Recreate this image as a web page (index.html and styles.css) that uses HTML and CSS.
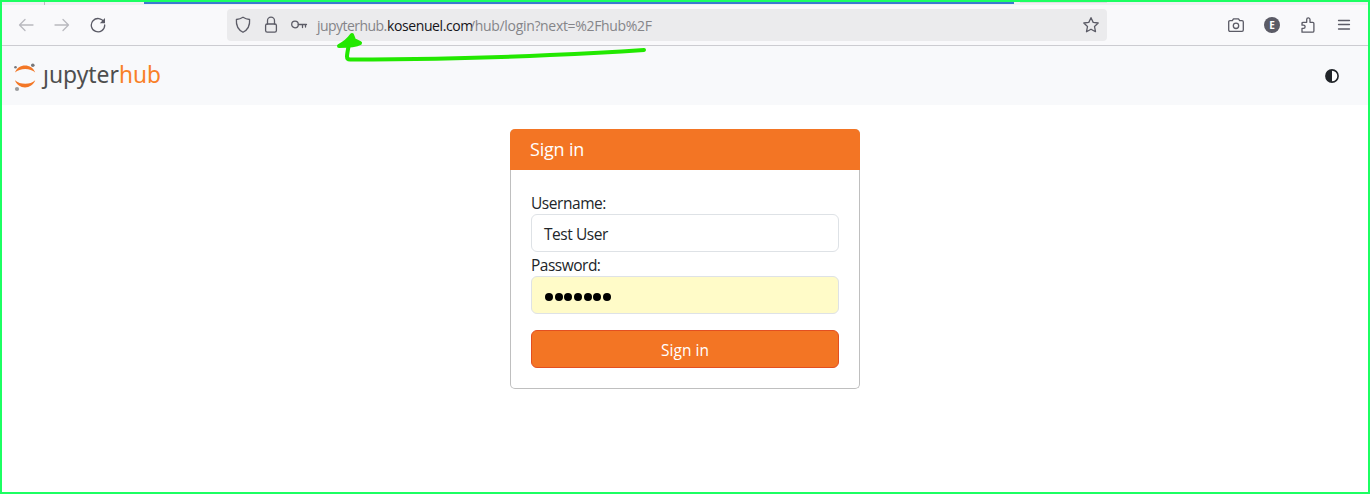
FILE: index.html
```html
<!DOCTYPE html>
<html lang="en">
<head>
<meta charset="utf-8">
<title>JupyterHub</title>
<link rel="stylesheet" href="styles.css">
</head>
<body>
<div class="window">
  <div class="tabstrip"><span class="tab-divider"></span><span class="tab-line"></span><span class="tab-edge"></span></div>
  <header class="toolbar">
    <div class="nav-buttons">
      <svg class="icon faded" viewBox="0 0 16 16"><path d="M15 8H1.500M7 2.500 1.500 8 7 13.500"/></svg>
      <svg class="icon faded" viewBox="0 0 16 16"><path d="M1 8h13.500M9 2.500 14.500 8 9 13.500"/></svg>
      <svg class="icon reload" viewBox="0 0 16 16"><path d="M14 5.200A6.700 6.700 0 1 0 14.700 8"/><path class="solid" d="M15 1v5.200H9.800z"/></svg>
    </div>
    <div class="urlbar">
      <svg class="icon shield" viewBox="0 0 16 18"><path d="M8 1.200c2 1.300 4 2 6.600 2.300.4 5-1.300 10-6.600 12.800C2.700 13.500 1 8.500 1.400 3.500 4 3.200 6 2.500 8 1.200z"/></svg>
      <svg class="icon lock" viewBox="0 0 16 18"><rect x="2.600" y="8" width="10.800" height="8.200" rx="1.600"/><path d="M4.500 8V4.700a3.500 3.500 0 0 1 7 0V8"/></svg>
      <svg class="icon key" viewBox="0 0 18 16"><circle cx="5" cy="7.500" r="3.300"/><path d="M8.300 7.500h8.200M12.500 7.500v3M15.500 7.500v2.500"/></svg>
      <div class="url"><span class="url-sub">jupyterhub.</span><span class="url-host">kosenuel.com</span><span class="url-path">/hub/login?next=%2Fhub%2F</span></div>
      <svg class="icon star" viewBox="0 0 18 18"><path d="M9 1.700 11.200 6.400l5 .6-3.700 3.500 1 5.200L9 13.200l-4.500 2.500 1-5.200L1.800 7l5-.6z"/></svg>
    </div>
    <div class="actions">
      <svg class="icon" viewBox="0 0 16 16"><path d="M2 3.600h2.300L5.500 1.800h5l1.200 1.800H14c.8 0 1.300.5 1.300 1.300V13c0 .8-.5 1.300-1.300 1.300H2c-.8 0-1.300-.5-1.300-1.300V4.900c0-.8.500-1.300 1.300-1.300z"/><circle cx="8" cy="8.800" r="2.700"/></svg>
      <span class="account">E</span>
      <svg class="icon" viewBox="0 0 16 16"><path d="M2 15.200h10.500c.9 0 1.400-.5 1.400-1.300V6.400c0-.7-.4-1.100-1.100-1.100H10V2.600c0-2.200-3.300-2.200-3.300 0v2.700H3.200c-.8 0-1.200.4-1.200 1.100v1.800h1.400c2.300 0 2.300 3.200 0 3.200H2z"/></svg>
      <svg class="icon" viewBox="0 0 16 16"><path d="M2.500 3.500h11M2.500 7.500h11M2.500 12h11"/></svg>
    </div>
  </header>
  <nav class="navbar">
    <svg class="logo" viewBox="0 0 150 40">
      <path class="logo-orange" d="M1 15.500C4 6 18 6 21.200 15.500 16.500 10.800 6 10.800 1 15.500zM1 23.300C4 32.800 18 32.800 21.200 23.300 16.500 28 6 28 1 23.300z"/>
      <circle class="dot" cx="18.800" cy="8.300" r="1.800"/><circle class="dot" cx="1.500" cy="10.300" r="1.300"/><circle class="dot light" cx="3" cy="32" r="2.100"/>
      <text class="word" x="29" y="25.500" textLength="76" lengthAdjust="spacingAndGlyphs">ȷupyter</text>
      <text class="word hub" x="105" y="25.500" textLength="42" lengthAdjust="spacingAndGlyphs">hub</text>
    </svg>
    <svg class="theme" viewBox="0 0 14 14"><circle cx="7" cy="7" r="6.100"/><path d="M7 1a6 6 0 0 0 0 12z"/></svg>
  </nav>
  <main class="content">
    <form class="card">
      <h1 class="card-title"><span>Sign in</span></h1>
      <div class="card-body">
        <label class="label"><span class="label-user">Username:</span></label>
        <div class="field"><span class="value">Test User</span></div>
        <label class="label"><span class="label-pass">Password:</span></label>
        <div class="field filled"><i></i><i></i><i></i><i></i><i></i><i></i><i></i></div>
        <button class="submit" type="button">Sign in</button>
      </div>
    </form>
  </main>
  <svg class="annotation" viewBox="0 0 320 40">
    <path d="M19 14Q17 24 17 26.500Q17 29.500 20 29.500Q140 29 220 25Q270 23 314 20"/>
    <path class="head" d="M9 16 Q17 12 22 5L24 10 30 13Q25 16 9 16z"/>
  </svg>
</div>
</body>
</html>
```

FILE: styles.css
```css
* { box-sizing: border-box; }
body { margin: 0; font-family: "Open Sans", "Noto Sans", sans-serif; color: #212529; }
.window { position: relative; width: 1370px; height: 494px; border: 2px solid #1cff62; background: #fff; display: flex; flex-direction: column; overflow: hidden; }
.tabstrip { height: 3px; flex: none; display: flex; background: #f0f0f4; }
.tab-divider { width: 1px; height: 3px; margin-left: 42px; background: #bcbcc2; }
.tab-line { width: 870px; height: 2px; margin-left: 99px; background: #3b7bd0; }
.tab-edge { width: 87px; height: 1px; margin-left: 6px; background: #dedee3; }
.toolbar { height: 41px; flex: none; display: flex; align-items: center; background: #f9f9fb; border-bottom: 1px solid #ccccd1; }
.icon { width: 16px; height: 16px; flex: none; display: block; fill: none; stroke: #5b5b66; stroke-width: 1.300; stroke-linecap: round; stroke-linejoin: round; }
.faded { stroke: #b9b9bf; }
.solid { fill: #5b5b66; stroke: none; }
.nav-buttons { display: flex; gap: 20px; width: 225px; padding-left: 16px; }
.urlbar { width: 880px; height: 32px; display: flex; align-items: center; padding: 0 8px; border-radius: 4px; background: #ebebed; }
.shield, .lock { height: 18px; }
.lock { margin-left: 12px; }
.key { width: 18px; margin-left: 11px; }
.star { width: 18px; height: 18px; margin-left: auto; margin-right: -1px; }
.url { display: flex; margin-left: 9px; padding-top: 2px; font-size: 14px; line-height: 20px; color: #858589; white-space: nowrap; }
.url span { display: block; flex: none; }
.url-sub { width: 70px; letter-spacing: -.55px; }
.url-host { width: 83px; color: #15141a; letter-spacing: -.4px; }
.url-path { letter-spacing: -.33px; }
.actions { display: flex; align-items: center; gap: 20px; margin-left: 121px; }
.account { width: 16px; height: 16px; border-radius: 50%; background: #5b5b66; color: #fff; font: 700 10px/16px "Open Sans", sans-serif; text-align: center; }
.navbar { height: 59px; flex: none; display: flex; align-items: center; justify-content: space-between; padding: 0 29px 0 12px; background: #f8f9fb; }
.logo { width: 150px; height: 40px; margin-top: 3px; display: block; }
.logo-orange { fill: #f37726; }
.dot { fill: #77787b; }
.light { fill: #9b9c9e; }
.word { font-family: "Noto Sans", sans-serif; font-size: 23px; fill: #4e4e4e; }
.hub { fill: #f98027; }
.theme { width: 14px; height: 14px; display: block; }
.theme circle { fill: #fff; stroke: #212529; stroke-width: 1.600; }
.theme path { fill: #212529; }
.content { display: flex; justify-content: center; padding-top: 24px; }
.card { width: 350px; height: 260px; margin: 0; border: 1px solid #bfbfbf; border-top: 0; border-radius: 5px; }
.card-title { height: 41px; margin: 0 -1px; padding: 0 20px; border-radius: 5px 5px 0 0; background: #f37524; color: #fff; font-size: 18px; font-weight: 400; line-height: 41px; letter-spacing: -.2px; }
.card-body { display: flex; flex-direction: column; padding: 20px; }
.label { height: 24px; font-size: 15.500px; line-height: 26px; }
.label-user { letter-spacing: -.45px; }
.label-pass { letter-spacing: -.5px; }
.field { height: 38px; display: flex; align-items: center; padding: 2px 12px 0; border: 1px solid #dee2e6; border-radius: 6px; font-size: 15.500px; letter-spacing: -.45px; }
.filled { gap: 1.700px; padding: 4px 13px 0; background: #fffbc8; }
.filled i { width: 8px; height: 8px; border-radius: 50%; background: #000; }
.submit { height: 38px; margin-top: 16px; padding: 2px 0 0; border: 1px solid #e34f21; border-radius: 6px; background: #f37524; color: #fff; font-family: inherit; font-size: 15.500px; letter-spacing: 0; }
.annotation { position: absolute; left: 328px; top: 28px; width: 320px; height: 40px; fill: none; stroke: #22e800; stroke-width: 4; stroke-linecap: round; stroke-linejoin: round; }
.head { fill: #22e800; }
```
